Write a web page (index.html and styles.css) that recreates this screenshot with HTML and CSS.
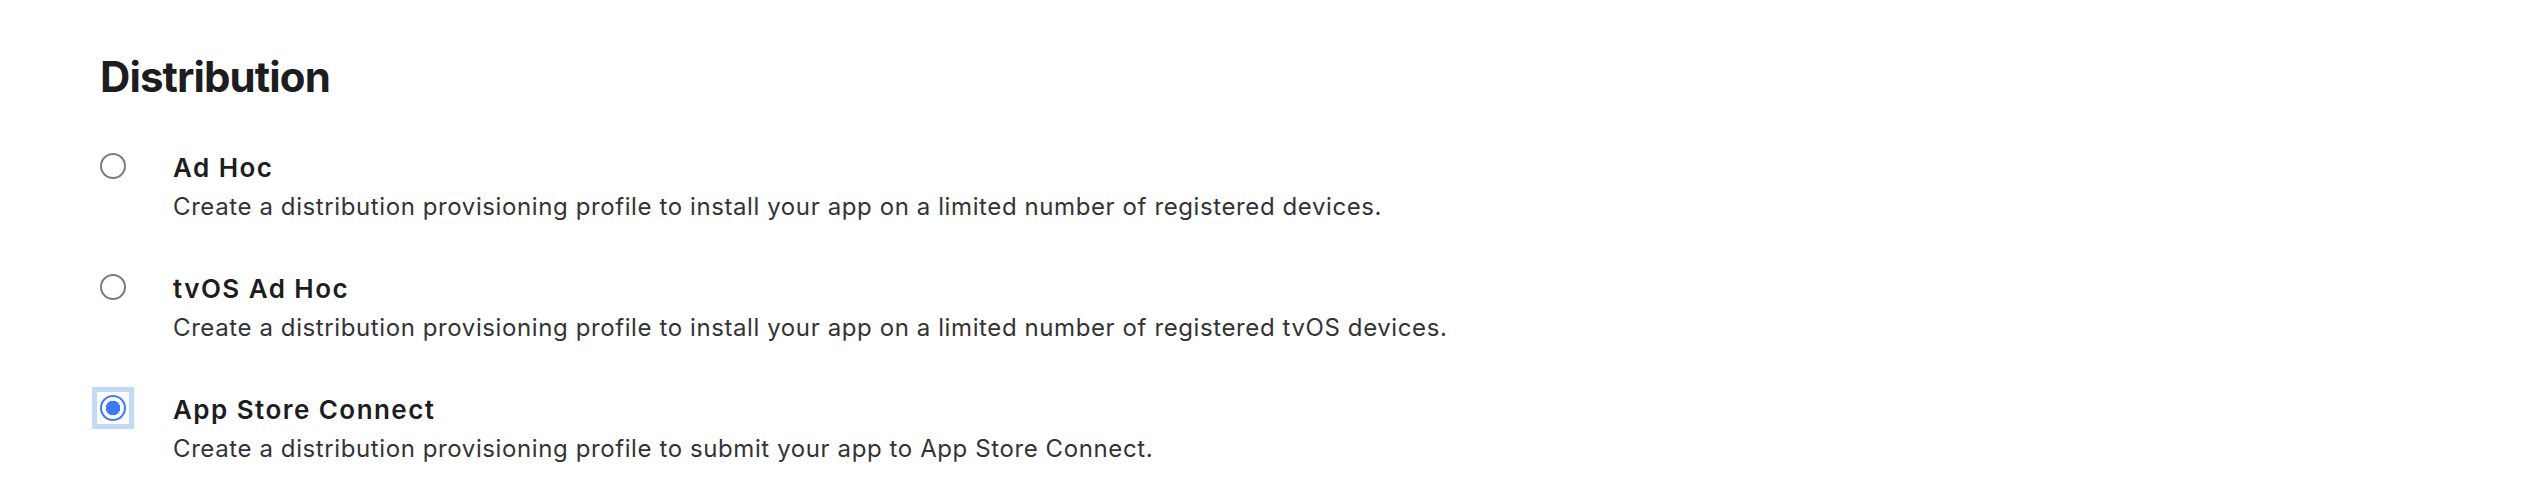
FILE: index.html
```html
<!DOCTYPE html>
<html lang="en">
<head>
  <meta charset="UTF-8" />
  <title>Distribution</title>
  <link rel="stylesheet" href="styles.css">
</head>
<body>
  <main class="page">
    <h1 class="section-title">Distribution</h1>
    <div class="options">
      <label class="option">
        <span class="radio-wrap"><input type="radio" name="dist" class="radio" /></span>
        <span class="option-text">
          <span class="option-title">Ad Hoc</span>
          <span class="option-desc">Create a distribution provisioning profile to install your app on a limited number of registered devices.</span>
        </span>
      </label>
      <label class="option">
        <span class="radio-wrap"><input type="radio" name="dist" class="radio" /></span>
        <span class="option-text">
          <span class="option-title">tvOS Ad Hoc</span>
          <span class="option-desc">Create a distribution provisioning profile to install your app on a limited number of registered tvOS devices.</span>
        </span>
      </label>
      <label class="option">
        <span class="radio-wrap focused"><input type="radio" name="dist" class="radio" checked /></span>
        <span class="option-text">
          <span class="option-title">App Store Connect</span>
          <span class="option-desc">Create a distribution provisioning profile to submit your app to App Store Connect.</span>
        </span>
      </label>
    </div>
  </main>
</body>
</html>
```

FILE: styles.css
```css
:root {
  --text: #1d1d1f;
  --muted: #333336;
  --blue: #3a7cf5;
  --focus: #c2d9f7;
}

* {
  box-sizing: border-box;
}

body {
  margin: 0;
  background: #fff;
  color: var(--text);
  font-family: Inter, "Noto Sans", sans-serif;
}

.page {
  padding: 52px 0 0 100px;
}

.section-title {
  margin: 0 0 51px;
  font-size: 42px;
  line-height: 50px;
  font-weight: 700;
  letter-spacing: -0.9px;
}

.options {
  display: flex;
  flex-direction: column;
  gap: 53px;
}

.option {
  display: flex;
  align-items: flex-start;
  gap: 47px;
}

.radio-wrap {
  display: block;
  flex: none;
  width: 26px;
  height: 26px;
}

.radio-wrap.focused {
  box-shadow: 0 0 0 3px #fff, 0 0 0 8px var(--focus);
}

.radio {
  appearance: none;
  display: block;
  margin: 0;
  width: 26px;
  height: 26px;
  border: 2px solid #7b7b7b;
  border-radius: 50%;
  background: #fff;
}

.radio:checked {
  border-color: var(--blue);
  background: radial-gradient(circle, var(--blue) 0 7px, #fff 7.5px);
}

.option-text {
  display: flex;
  flex-direction: column;
}

.option-title {
  font-size: 26px;
  line-height: 30px;
  font-weight: 600;
  letter-spacing: 1.45px;
}

.option-desc {
  margin-top: 10px;
  font-size: 24px;
  line-height: 28px;
  letter-spacing: 0.6px;
  color: var(--muted);
}
```
